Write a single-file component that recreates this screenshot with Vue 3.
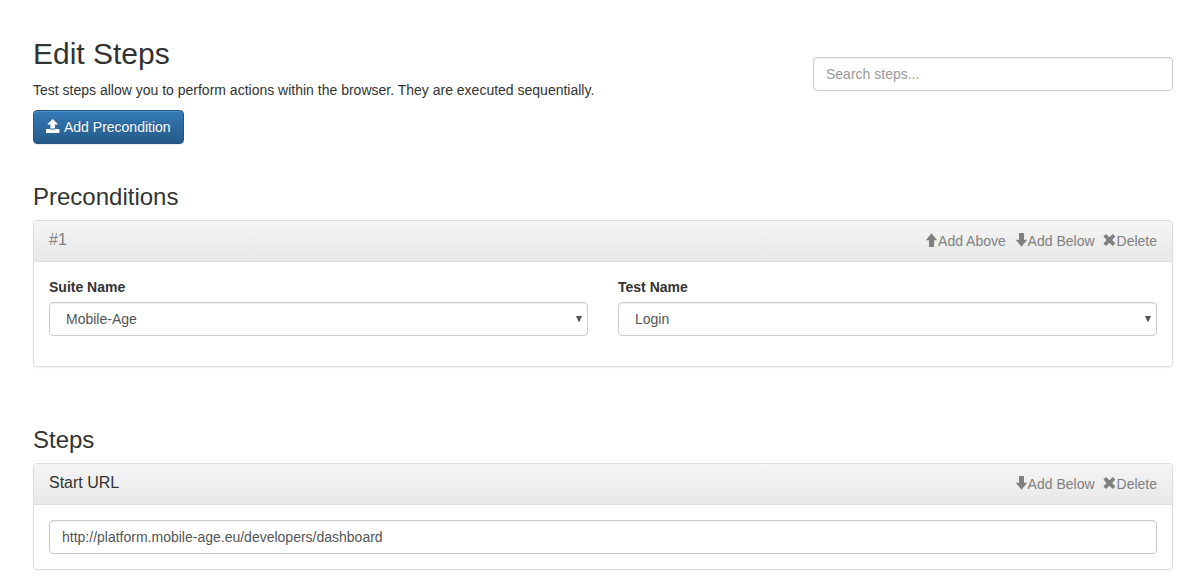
<script setup>
import { ref } from 'vue'

const icons = {
  up: 'M5.5 0.2 11.2 7.2H8V14H3V7.2H-0.2Z',
  down: 'M5.5 13.8 -0.2 6.8H3V0H8V6.8H11.2Z',
  remove: 'M3 1 6.4 4.2 9.8 1 12.4 3.6 9.2 7 12.4 10.4 9.8 13 6.4 9.8 3 13 0.4 10.4 3.6 7 0.4 3.6Z',
}
const search = ref('')
const url = ref('http://platform.mobile-age.eu/developers/dashboard')
const fields = [
  { label: 'Suite Name', value: 'Mobile-Age' },
  { label: 'Test Name', value: 'Login' },
]
const above = { icon: 'up', text: 'Add Above' }
const below = { icon: 'down', text: 'Add Below' }
const remove = { icon: 'remove', text: 'Delete' }
const preconditionActions = [above, below, remove]
const stepActions = [below, remove]
</script>

<template>
  <main class="page">
    <header class="top">
      <div>
        <h1>Edit Steps</h1>
        <p>Test steps allow you to perform actions within the browser. They are executed sequentially.</p>
        <button class="primary" type="button">
          <svg class="upload" width="14" height="14" viewBox="0 0 14 14"><path d="M6.7 0 12.2 5.6H9V9.4H4.4V5.6H1.2ZM0 10H4V10.6H9.4V10H13.4V14H0Z" /></svg>
          <span>Add Precondition</span>
        </button>
      </div>
      <input v-model="search" class="control search" type="text" placeholder="Search steps...">
    </header>

    <section class="preconditions">
      <h2>Preconditions</h2>
      <div class="panel">
        <div class="panel-head">
          <h3 class="muted">#1</h3>
          <nav>
            <a v-for="a in preconditionActions" :key="a.text" :class="a.icon">
              <svg :width="a.icon === 'remove' ? 14 : 12" height="14" :viewBox="a.icon === 'remove' ? '0 0 14 14' : '0 0 12 14'"><path :d="icons[a.icon]" /></svg>{{ a.text }}
            </a>
          </nav>
        </div>
        <div class="panel-body fields">
          <div v-for="f in fields" :key="f.label" class="field">
            <label>{{ f.label }}</label>
            <div class="control select">
              <span>{{ f.value }}</span>
              <svg width="6" height="6" viewBox="0 0 6 6"><path d="M0 0H6L3.4 5.8H2.6Z" /></svg>
            </div>
          </div>
        </div>
      </div>
    </section>

    <section class="steps">
      <h2>Steps</h2>
      <div class="panel">
        <div class="panel-head">
          <h3>Start URL</h3>
          <nav>
            <a v-for="a in stepActions" :key="a.text" :class="a.icon">
              <svg :width="a.icon === 'remove' ? 14 : 12" height="14" :viewBox="a.icon === 'remove' ? '0 0 14 14' : '0 0 12 14'"><path :d="icons[a.icon]" /></svg>{{ a.text }}
            </a>
          </nav>
        </div>
        <div class="panel-body">
          <input v-model="url" class="control" type="text">
        </div>
      </div>
    </section>
  </main>
</template>

<style>
body { background: #fff; overflow: hidden; }
</style>

<style scoped>
.page, .page * { box-sizing: border-box; }
.page {
  height: 583px;
  padding: 37px 23px 0 33px;
  font: 14px/20px "Liberation Sans", Arial, sans-serif;
  color: #333;
}
h1, h2, h3, p { margin: 0; font-weight: 400; }
h1 { font-size: 30px; line-height: 33px; margin-bottom: 10px; }
h2 { font-size: 24px; line-height: 26px; margin-bottom: 10px; }
h3 { font-size: 16px; line-height: 17.6px; }
p { margin-bottom: 10px; }
svg { fill: currentColor; flex: none; overflow: visible; }
.top { display: flex; justify-content: space-between; align-items: flex-start; }
.primary {
  display: flex;
  align-items: center;
  gap: 4px;
  height: 34px;
  padding: 0 12px;
  border: 1px solid #245580;
  border-radius: 4px;
  background: linear-gradient(#337ab7, #265a88);
  box-shadow: inset 0 1px 0 rgba(255, 255, 255, .15), 0 1px 1px rgba(0, 0, 0, .075);
  color: #fff;
  font: inherit;
  text-shadow: 0 -1px 0 rgba(0, 0, 0, .2);
}
.upload { margin-bottom: 2px; }
.control {
  display: block;
  width: 100%;
  height: 34px;
  padding: 6px 12px;
  border: 1px solid #ccc;
  border-radius: 4px;
  outline: 0;
  background: #fff;
  box-shadow: inset 0 1px 1px rgba(0, 0, 0, .075);
  color: #555;
  font: inherit;
}
.control::placeholder { color: #999; opacity: 1; }
.search { width: 360px; margin-top: 20px; }
.preconditions { margin-top: 40px; }
.steps { margin-top: 60px; }
.panel {
  border: 1px solid #ddd;
  border-radius: 4px;
  box-shadow: 0 1px 2px rgba(0, 0, 0, .05);
}
.panel-head {
  display: flex;
  justify-content: space-between;
  height: 41px;
  padding: 10px 15px;
  border-bottom: 1px solid #ddd;
  border-radius: 3px 3px 0 0;
  background: linear-gradient(#f5f5f5, #e8e8e8);
}
.muted { color: #808080; }
nav { display: flex; color: #808080; }
nav a { display: flex; white-space: nowrap; }
nav svg { margin-top: 2px; }
.up { margin-right: 9.8px; }
.down { margin-right: 8px; }
.panel-body { padding: 15px; }
.fields { display: grid; grid-template-columns: 1fr 1fr; gap: 30px; }
.field { margin-bottom: 15px; }
label { display: block; margin-bottom: 5px; font-weight: 700; }
.select { display: flex; justify-content: space-between; align-items: center; padding: 0 5px 0 16px; }
</style>
